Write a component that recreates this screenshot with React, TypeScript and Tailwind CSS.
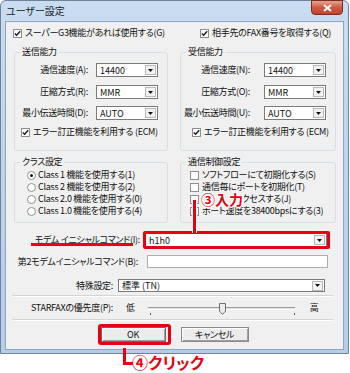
import React from "react";

function Check({ checked = false }: { checked?: boolean }) {
  return (
    <span className="flex h-[9px] w-[9px] shrink-0 items-center justify-center border border-[#8e8f8f] bg-white">
      {checked && (
        <svg width="7" height="7" viewBox="0 0 7 7">
          <path d="M0.8 3.4 L2.6 5.2 L6.2 1.2" fill="none" stroke="#1a1a1a" strokeWidth="1.4" />
        </svg>
      )}
    </span>
  );
}

function Radio({ checked = false }: { checked?: boolean }) {
  return (
    <span className="flex h-[9px] w-[9px] shrink-0 items-center justify-center rounded-full border border-[#8e8f8f] bg-white">
      {checked && <span className="h-[3px] w-[3px] rounded-full bg-[#1a1a1a]" />}
    </span>
  );
}

function Arrow() {
  return (
    <span className="m-[1px] flex h-[10px] w-[11px] shrink-0 items-center justify-center border border-[#b8b8b8] bg-[#f2f2f2]">
      <svg width="5" height="3" viewBox="0 0 5 3">
        <path d="M0 0 H5 L2.5 3 Z" fill="#111" />
      </svg>
    </span>
  );
}

function Combo({ value, className }: { value: string; className: string }) {
  return (
    <div className={`flex items-center border border-[#7a7a7a] bg-white ${className}`}>
      <span className="flex-1 whitespace-nowrap pl-[3px] text-[9px] leading-none tracking-normal">{value}</span>
      <Arrow />
    </div>
  );
}

function Row({ label, value, labelW }: { label: string; value: string; labelW: string }) {
  return (
    <div className="flex h-[14px] items-center">
      <span className={`whitespace-nowrap text-right ${labelW}`}>{label}</span>
      <Combo value={value} className="ml-auto mr-[9px] h-[14px] w-[62px]" />
    </div>
  );
}

function CheckItem({ checked, label, className = "" }: { checked?: boolean; label: string; className?: string }) {
  return (
    <div className={`flex h-[12px] items-center gap-[3px] ${className}`}>
      <Check checked={checked} />
      <span className="whitespace-nowrap">{label}</span>
    </div>
  );
}

function RadioItem({ checked, label }: { checked?: boolean; label: string }) {
  return (
    <div className="flex h-[12px] items-center gap-[2px] pl-[12px]">
      <Radio checked={checked} />
      <span className="whitespace-nowrap">{label}</span>
    </div>
  );
}

const groupCls = "rounded-[3px] border border-[#d5dfe5] px-0";
const legendCls = "ml-[5px] px-[2px] leading-[14px]";

export default function App() {
  return (
    <div className="relative h-[373px] w-[350px] overflow-hidden bg-white font-['Noto_Sans_CJK_JP',sans-serif] text-[9px] tracking-[-0.3px] text-[#111] [font-feature-settings:'palt']">
      {/* Window */}
      <div className="flex h-[354px] w-[349px] flex-col rounded-t-[6px] border border-[#6f8299] bg-gradient-to-b from-[#c9dcf2] via-[#bed3ec] to-[#b6cde8] px-[4px] pb-[3px]">
        {/* Title bar */}
        <div className="flex h-[20px] items-start justify-between">
          <span className="mt-[3px] pl-[1px] text-[10px] leading-[14px] tracking-normal text-[#1c1c1c]">ユーザー設定</span>
          <div className="-mt-[1px] mr-[1px] flex h-[15px] w-[32px] items-center justify-center rounded-b-[4px] border border-[#7a2b22] bg-gradient-to-b from-[#e5a390] via-[#cc5a44] to-[#c2422d]">
            <svg width="9" height="8" viewBox="0 0 9 8">
              <path d="M1 1 L8 7 M8 1 L1 7" stroke="#fff" strokeWidth="2" />
            </svg>
          </div>
        </div>

        {/* Client */}
        <div className="flex flex-1 flex-col border border-[#8ea4bf] bg-[#f0f0f0]">
          <div className="flex flex-col pl-[8px]">
            {/* top checkboxes */}
            <div className="mt-[5px] flex">
              <div className="-ml-[1px] w-[155px]">
                <CheckItem checked label="スーパーG3機能があれば使用する(G)" />
              </div>
              <div className="ml-[12px] pl-[20px]">
                <CheckItem checked label="相手先のFAX番号を取得する(Q)" />
              </div>
            </div>

            {/* capability groups */}
            <div className="mt-[6px] flex gap-[12px]">
              <fieldset className={`${groupCls} w-[154px] pb-[12px]`}>
                <legend className={legendCls}>送信能力</legend>
                <div className="mt-[4px] flex flex-col">
                  <Row label="通信速度(A):" value="14400" labelW="w-[73px]" />
                  <div className="mt-[8px]">
                    <Row label="圧縮方式(R):" value="MMR" labelW="w-[73px]" />
                  </div>
                  <div className="mt-[7px]">
                    <Row label="最小伝送時間(D):" value="AUTO" labelW="w-[73px]" />
                  </div>
                  <CheckItem checked label="エラー訂正機能を利用する (ECM)" className="mt-[6px] pl-[6px]" />
                </div>
              </fieldset>
              <fieldset className={`${groupCls} w-[156px] pb-[12px]`}>
                <legend className={legendCls}>受信能力</legend>
                <div className="mt-[4px] flex flex-col">
                  <Row label="通信速度(N):" value="14400" labelW="w-[69px]" />
                  <div className="mt-[8px]">
                    <Row label="圧縮方式(O):" value="MMR" labelW="w-[69px]" />
                  </div>
                  <div className="mt-[7px]">
                    <Row label="最小伝送時間(U):" value="AUTO" labelW="w-[69px]" />
                  </div>
                  <CheckItem checked label="エラー訂正機能を利用する (ECM)" className="mt-[6px] pl-[11px]" />
                </div>
              </fieldset>
            </div>

            {/* class / control groups */}
            <div className="mt-[4px] flex gap-[12px]">
              <fieldset className={`${groupCls} w-[154px] pb-[5px]`}>
                <legend className={legendCls}>クラス設定</legend>
                <div className="flex flex-col">
                  <RadioItem checked label="Class 1 機能を使用する(1)" />
                  <RadioItem label="Class 2 機能を使用する(2)" />
                  <RadioItem label="Class 2.0 機能を使用する(0)" />
                  <RadioItem label="Class 1.0 機能を使用する(4)" />
                </div>
              </fieldset>
              <fieldset className={`${groupCls} w-[156px] pb-[5px]`}>
                <legend className={legendCls}>通信制御設定</legend>
                <div className="flex flex-col pl-[9px]">
                  <CheckItem label="ソフトフローにて初期化する(S)" />
                  <CheckItem label="通信毎にポートを初期化(T)" />
                  <CheckItem label="ポートにアクセスする(J)" />
                  <CheckItem label="ポート速度を38400bpsにする(3)" />
                </div>
              </fieldset>
            </div>
          </div>

          {/* modem command */}
          <div className="mt-[10px] flex h-[14px] items-center">
            <span className="w-[134px] whitespace-nowrap text-right">モデム イニシャルコマンド(I):</span>
            <div className="relative ml-[5px] flex h-[14px] w-[182px] items-center border border-[#7a7a7a] bg-white">
              <span className="flex-1 pl-[3px] text-[9px] leading-none tracking-normal">h1h0</span>
              <Arrow />
              <div className="absolute -bottom-[3px] -left-[3px] -right-[4px] -top-[3px] rounded-[2px] border-[3px] border-[#e60012]" />
            </div>
          </div>

          <div className="mt-[8px] flex h-[13px] items-center">
            <span className="w-[132px] whitespace-nowrap text-right">第2モデムイニシャルコマンド(B):</span>
            <div className="ml-[9px] h-[13px] w-[181px] border border-[#abadb3] bg-white" />
          </div>

          <div className="mt-[11px] flex h-[13px] items-center">
            <span className="w-[107px] whitespace-nowrap text-right">特殊設定:</span>
            <Combo value="標準 (TN)" className="ml-[5px] h-[13px] w-[207px]" />
          </div>

          <div className="ml-[6px] mt-[3px] w-[321px] border-b border-t border-b-white border-t-[#d4d4d4]" />

          {/* priority slider */}
          <div className="mt-[5px] flex h-[12px] items-center">
            <span className="w-[107px] whitespace-nowrap text-right">STARFAXの優先度(P):</span>
            <span className="ml-[13px]">低</span>
            <div className="relative ml-[13px] h-[3px] w-[147px] border-b border-t border-b-white border-t-[#9a9a9a] bg-[#e3e3e3]">
              <svg className="absolute -top-[5px] left-[71px]" width="7" height="12" viewBox="0 0 7 12">
                <path d="M0.5 0.5 H6.5 V8 L3.5 11.5 L0.5 8 Z" fill="#ececec" stroke="#707070" />
              </svg>
              <span className="absolute left-[2px] top-[5px] h-[2px] w-[1px] bg-[#555]" />
              <span className="absolute right-[0px] top-[5px] h-[2px] w-[1px] bg-[#555]" />
            </div>
            <span className="ml-[15px]">高</span>
          </div>

          <div className="ml-[6px] mt-[5px] w-[321px] border-b border-t border-b-white border-t-[#d4d4d4]" />

          {/* buttons */}
          <div className="mt-[6px] flex justify-center gap-[15px]">
            <div className="relative flex h-[15px] w-[65px] items-center justify-center border border-[#6a6a6a] bg-[#ececec] shadow-[inset_1px_1px_0_#fff,inset_-1px_-1px_0_#a0a0a0]">
              OK
              <div className="absolute -bottom-[4px] -left-[4px] -right-[6px] -top-[4px] rounded-[3px] border-[3px] border-[#e60012]" />
            </div>
            <div className="flex h-[15px] w-[68px] items-center justify-center border border-[#8a8a8a] bg-[#ececec] shadow-[inset_1px_1px_0_#fff,inset_-1px_-1px_0_#a0a0a0]">
              キャンセル
            </div>
          </div>
        </div>
      </div>

      {/* annotation: modem label underline */}
      <div className="absolute left-[31px] top-[243px] h-[3px] w-[102px] bg-[#e60012]" />

      {/* annotation: ③入力 */}
      <div className="absolute left-[192px] top-[200px] h-[33px] w-[5px] border-x border-white bg-[#e60012]" />
      <span className="absolute left-[200px] top-[192px] bg-[#f0f0f0] pl-[1px] pr-[1px] text-[14px] font-bold leading-[15px] tracking-normal text-[#e60012] [text-shadow:1px_0_0_#fff,-1px_0_0_#fff,0_1px_0_#fff,0_-1px_0_#fff,1px_1px_0_#fff,-1px_-1px_0_#fff,1px_-1px_0_#fff,-1px_1px_0_#fff]">
        ③入力
      </span>

      {/* annotation: ④クリック */}
      <div className="absolute left-[123px] top-[348px] h-[17px] w-[3px] bg-[#e60012]" />
      <div className="absolute left-[123px] top-[362px] h-[3px] w-[10px] bg-[#e60012]" />
      <span className="absolute left-[132px] top-[353px] text-[16px] font-bold leading-[19px] tracking-normal text-[#e60012]">④クリック</span>
    </div>
  );
}
